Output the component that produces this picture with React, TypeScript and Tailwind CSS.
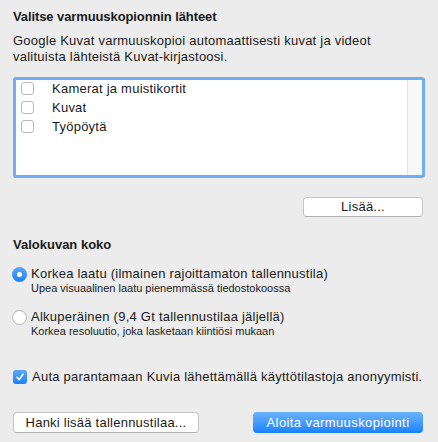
import React from "react";

function Box() {
  return (
    <span className="block w-[13px] h-[13px] rounded-[3px] border border-[#b9b9b9] bg-white shrink-0" />
  );
}

export default function App() {
  const rows = ["Kamerat ja muistikortit", "Kuvat", "Työpöytä"];
  return (
    <div className="w-[438px] h-[442px] bg-[#ececec] px-[13px] pt-[9px] flex flex-col font-['Liberation_Sans',sans-serif] text-[13px] tracking-[0.24px] text-[#1a1a1a]">
      <div className="font-bold leading-[16px] tracking-[-0.1px]">Valitse varmuuskopionnin lähteet</div>
      <div className="mt-[8px] leading-[16px]">
        Google Kuvat varmuuskopioi automaattisesti kuvat ja videot
        <br />
        valituista lähteistä Kuvat-kirjastoosi.
      </div>
      <div className="mt-[12px] h-[101px] border-[3px] border-[#6eaef2] rounded-[3px] bg-white flex">
        <div className="flex-1 pl-[5px] -mt-[1px]">
          {rows.map((r) => (
            <div key={r} className="h-[19px] flex items-center">
              <Box />
              <span className="ml-[18px] leading-[16px]">{r}</span>
            </div>
          ))}
        </div>
        <div className="w-[15px] bg-[#f8f8f8] border-l border-[#e2e2e2]" />
      </div>
      <div className="mt-[19px] flex justify-end pr-[2px]">
        <button className="w-[120px] h-[20px] bg-white border border-[#c5c5c5] border-b-[#b0b0b0] rounded-[4px] leading-[16px] text-[13px] tracking-[0.24px] text-[#1a1a1a]">
          Lisää...
        </button>
      </div>
      <div className="mt-[20px] font-bold leading-[16px] tracking-[0px]">Valokuvan koko</div>
      <div className="mt-[13px] flex items-center -ml-[1px]">
        <span className="w-[15px] h-[15px] rounded-full bg-linear-to-b from-[#5aa7f8] to-[#1a7ff6] flex items-center justify-center shrink-0">
          <span className="w-[5px] h-[5px] rounded-full bg-white" />
        </span>
        <span className="ml-[4px] leading-[16px]">Korkea laatu (ilmainen rajoittamaton tallennustila)</span>
      </div>
      <div className="ml-[18px] text-[11px] leading-[13px] tracking-[0px]">Upea visuaalinen laatu pienemmässä tiedostokoossa</div>
      <div className="mt-[14px] flex items-center -ml-[1px]">
        <span className="w-[15px] h-[15px] rounded-full bg-white border border-[#b5b5b5] shrink-0" />
        <span className="ml-[4px] leading-[16px]">Alkuperäinen (9,4 Gt tallennustilaa jäljellä)</span>
      </div>
      <div className="ml-[18px] text-[11px] leading-[13px] tracking-[0px]">Korkea resoluutio, joka lasketaan kiintiösi mukaan</div>
      <div className="mt-[31px] flex items-center">
        <span className="w-[14px] h-[14px] rounded-[3px] bg-linear-to-b from-[#5aa7f8] to-[#1a7ff6] flex items-center justify-center shrink-0">
          <svg width="10" height="10" viewBox="0 0 10 10">
            <path d="M2 5.2 L4.2 7.6 L8 2.2" fill="none" stroke="white" strokeWidth="1.6" strokeLinecap="round" strokeLinejoin="round" />
          </svg>
        </span>
        <span className="ml-[5px] leading-[16px]">Auta parantamaan Kuvia lähettämällä käyttötilastoja anonyymisti.</span>
      </div>
      <div className="mt-[27px] flex justify-between pr-[2px]">
        <button className="w-[186px] h-[21px] bg-white border border-[#c5c5c5] border-b-[#b0b0b0] rounded-[4px] leading-[16px] text-[13px] tracking-[0.24px] text-[#1a1a1a]">
          Hanki lisää tallennustilaa...
        </button>
        <button className="w-[170px] h-[21px] bg-linear-to-b from-[#6ab2fa] to-[#1482fb] rounded-[4px] leading-[16px] text-[13px] tracking-[0.4px] text-white">
          Aloita varmuuskopiointi
        </button>
      </div>
    </div>
  );
}
